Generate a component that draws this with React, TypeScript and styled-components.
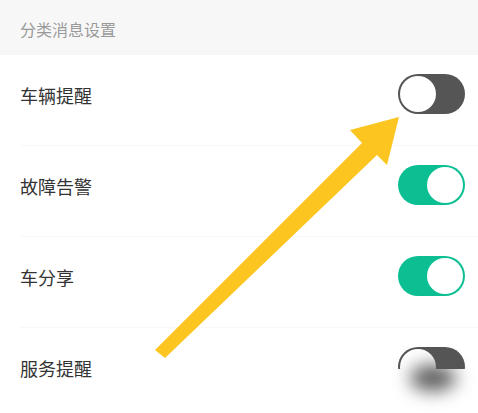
import styled, { createGlobalStyle } from "styled-components";
import { useState } from "react";

const GlobalStyle = createGlobalStyle`
  html, body {
    margin: 0;
    padding: 0;
    background: #ffffff;
  }
  body {
    font-family: "Noto Sans CJK SC", "Noto Sans", sans-serif;
  }
`;

const Page = styled.div`
  position: relative;
  width: 478px;
  height: 413px;
  overflow: hidden;
  background: #ffffff;
`;

const SectionHeader = styled.div`
  height: 55px;
  display: flex;
  align-items: center;
  padding: 2px 20px 0;
  box-sizing: border-box;
  background: #f7f7f7;
  color: #9a9a9a;
  font-size: 16px;
`;

const List = styled.div`
  display: flex;
  flex-direction: column;
  padding-left: 20px;
`;

const Row = styled.div`
  display: flex;
  align-items: center;
  justify-content: space-between;
  height: 78px;
  padding: 0 13px 12px 0;
  border-bottom: 1px solid #f8f8f8;
`;

const Label = styled.div`
  font-size: 18px;
  color: #333333;
  margin-top: 2px;
`;

const Track = styled.button<{ $on: boolean }>`
  display: flex;
  align-items: center;
  justify-content: ${(p) => (p.$on ? "flex-end" : "flex-start")};
  width: 67px;
  height: 40px;
  padding: 2px;
  box-sizing: border-box;
  border: 0;
  border-radius: 20px;
  background: ${(p) => (p.$on ? "#0cbf93" : "#555555")};
  cursor: pointer;
`;

const Knob = styled.span`
  width: 36px;
  height: 36px;
  border-radius: 50%;
  background: #ffffff;
`;

const Overlay = styled.svg`
  position: absolute;
  left: 0;
  top: 0;
  pointer-events: none;
`;

const Watermark = styled.div`
  position: absolute;
  left: 380px;
  top: 369px;
  right: 0;
  bottom: 0;
  display: flex;
  justify-content: flex-end;
  padding: 0 22px 0 0;
  background: linear-gradient(90deg, rgba(255, 255, 255, 0.9), #ffffff 25%);
  pointer-events: none;
`;

const Blob = styled.div`
  width: 46px;
  height: 26px;
  margin-top: -4px;
  border-radius: 50%;
  background: #5a5a5a;
  filter: blur(9px);
`;

interface Item {
  id: number;
  name: string;
  on: boolean;
}

const initial: Item[] = [
  { id: 1, name: "车辆提醒", on: false },
  { id: 2, name: "故障告警", on: true },
  { id: 3, name: "车分享", on: true },
  { id: 4, name: "服务提醒", on: false },
];

function App() {
  const [items, setItems] = useState<Item[]>(initial);
  const toggle = (id: number) => {
    setItems(items.map((it) => (it.id === id ? { ...it, on: !it.on } : it)));
  };
  return (
    <Page>
      <GlobalStyle />
      <SectionHeader>分类消息设置</SectionHeader>
      <List>
        {items.map((item) => (
          <Row key={item.id}>
            <Label>{item.name}</Label>
            <Track $on={item.on} onClick={() => toggle(item.id)}>
              <Knob />
            </Track>
          </Row>
        ))}
      </List>
      <Overlay width="478" height="413" viewBox="0 0 478 413">
        <polygon
          fill="#fcc51f"
          points="155,350 165,358 377,155 387,165 399,117 350,130 362,143"
        />
      </Overlay>
      <Watermark>
        <Blob />
      </Watermark>
    </Page>
  );
}

export default App;
